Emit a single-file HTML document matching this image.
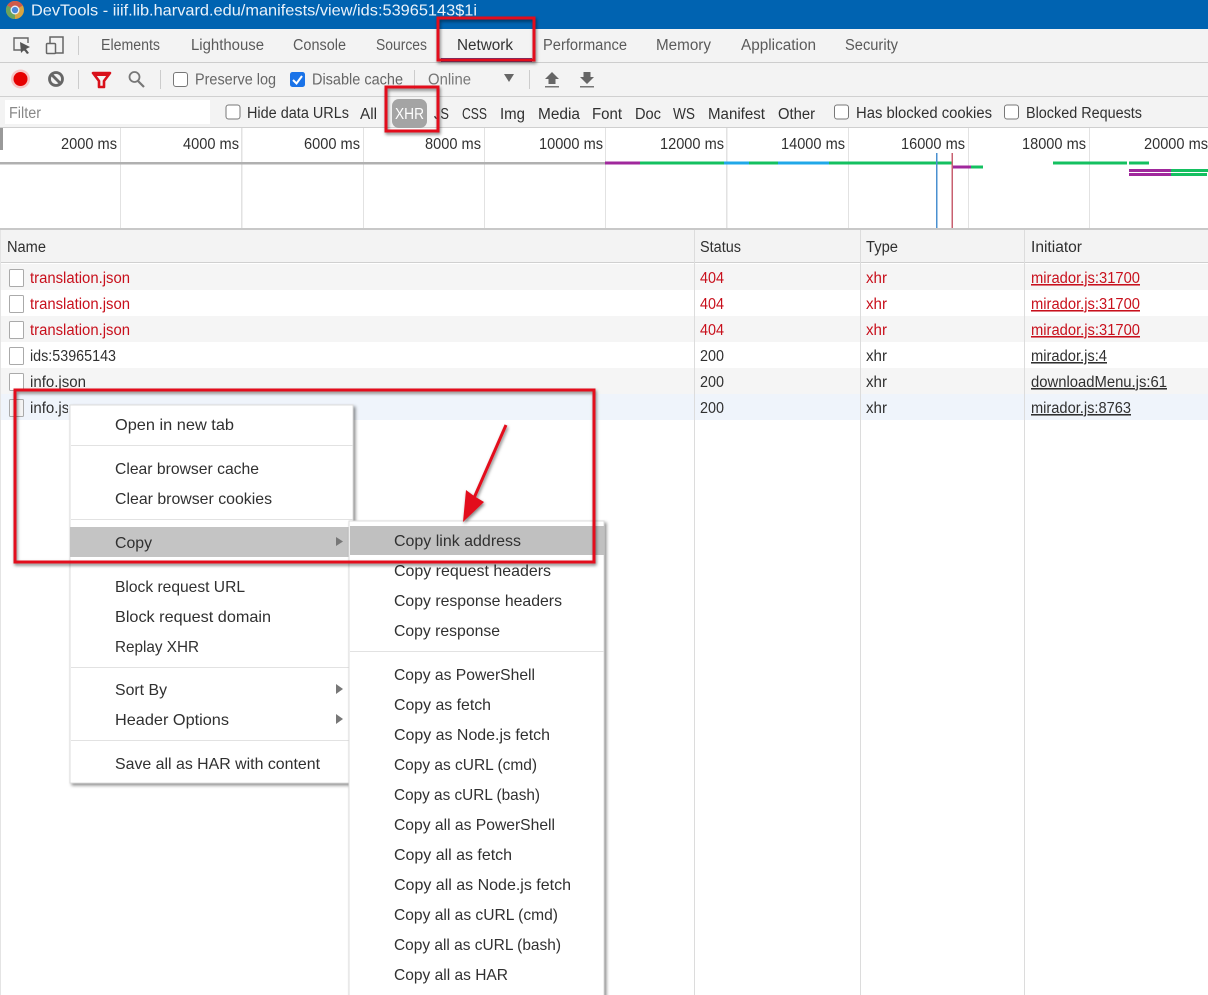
<!DOCTYPE html>
<html><head><meta charset="utf-8"><style>
html,body{margin:0;padding:0;background:#fff;width:1208px;height:995px;overflow:hidden}
svg{display:block}
text{font-family:"Liberation Sans",sans-serif;font-size:15.5px;fill:#444}
.d text{fill:#303030}
.t text{fill:#5a5a5a}
.r text{fill:#c8101c}
.m text{fill:#303030;font-size:16px}
</style></head><body>
<svg width="1208" height="995" viewBox="0 0 1208 995" xmlns="http://www.w3.org/2000/svg" lengthAdjust="spacingAndGlyphs">
<defs>
<filter id="ms" x="-10%" y="-10%" width="120%" height="120%"><feDropShadow dx="2" dy="2" stdDeviation="1.5" flood-color="#000" flood-opacity=".45"/></filter>
<filter id="rs" x="-10%" y="-10%" width="120%" height="120%"><feDropShadow dx="1" dy="2" stdDeviation="1.5" flood-color="#000" flood-opacity=".5"/></filter>
<clipPath id="c1"><rect x="0" y="395" width="68" height="25"/></clipPath>
</defs>
<rect width="1208" height="995" fill="#fff"/>
<!-- title -->
<rect width="1208" height="29" fill="#0063b1"/>
<circle cx="15" cy="10" r="9" fill="#d9a441"/><path d="M15 10L7.200 5.500A9 9 0 0 1 22.800 5.500Z" fill="#cf5a4a"/><path d="M15 10L15 19A9 9 0 0 1 7.200 5.500Z" fill="#6ba35c"/><circle cx="15" cy="10" r="3.800" fill="#4a86d8" stroke="#e8eef5" stroke-width="1.300"/>
<text x="31" y="15.500" textLength="446" lengthAdjust="spacingAndGlyphs" style="fill:#eaf2fa;font-size:16px">DevTools - iiif.lib.harvard.edu/manifests/view/ids:53965143$1i</text>
<!-- tabs -->
<rect y="29" width="1208" height="33" fill="#f3f3f3"/>
<rect y="62" width="1208" height="1" fill="#cdcdcd"/>
<path d="M25 50H14V38H28V43" fill="none" stroke="#666" stroke-width="1.400"/><path d="M20 42L30 47L26 49L29 53L27 54L24 50L21 53Z" fill="#555"/>
<rect x="46.500" y="43.500" width="9" height="10" rx="1" fill="none" stroke="#666" stroke-width="1.500"/><path d="M50 43V37H63V53H55" fill="none" stroke="#666" stroke-width="1.500"/>
<rect x="78" y="36" width="1" height="19" fill="#ccc"/>
<g class="t">
<text x="101" y="50" textLength="59" lengthAdjust="spacingAndGlyphs">Elements</text>
<text x="191" y="50" textLength="73" lengthAdjust="spacingAndGlyphs">Lighthouse</text>
<text x="293" y="50" textLength="53" lengthAdjust="spacingAndGlyphs">Console</text>
<text x="376" y="50" textLength="51" lengthAdjust="spacingAndGlyphs">Sources</text>
<text x="543" y="50" textLength="84" lengthAdjust="spacingAndGlyphs">Performance</text>
<text x="656" y="50" textLength="55" lengthAdjust="spacingAndGlyphs">Memory</text>
<text x="741" y="50" textLength="75" lengthAdjust="spacingAndGlyphs">Application</text>
<text x="845" y="50" textLength="53" lengthAdjust="spacingAndGlyphs">Security</text>
</g>
<text x="457" y="50" textLength="56" lengthAdjust="spacingAndGlyphs" style="fill:#333">Network</text>
<rect x="441" y="58" width="91" height="4" fill="#2a4a9a"/>
<!-- toolbar -->
<rect y="63" width="1208" height="33" fill="#f3f3f3"/>
<rect y="96" width="1208" height="1" fill="#d0d0d0"/>
<circle cx="20.500" cy="79" r="9.500" fill="#f6c4c4"/><circle cx="20.500" cy="79" r="7" fill="#e60000"/>
<circle cx="56" cy="79" r="6.500" fill="none" stroke="#666" stroke-width="2.800"/><path d="M51.500 74.500L60.500 83.500" stroke="#666" stroke-width="2.800"/>
<rect x="78" y="70" width="1" height="19" fill="#ccc"/>
<path d="M93 73H110L104 81V87H99V81Z" fill="none" stroke="#d9101a" stroke-width="2.600" stroke-linejoin="round"/><rect x="94" y="73" width="15" height="3" fill="#d9101a"/>
<circle cx="134.500" cy="77" r="5" fill="none" stroke="#777" stroke-width="1.800"/><path d="M138 81L144 87" stroke="#777" stroke-width="2.200"/>
<rect x="160" y="70" width="1" height="19" fill="#ccc"/>
<rect x="173.500" y="72.500" width="14" height="14" rx="2.500" fill="#fff" stroke="#777"/>
<text x="195" y="84.500" textLength="81" lengthAdjust="spacingAndGlyphs" style="fill:#666">Preserve log</text>
<rect x="290" y="72" width="15" height="15" rx="2.500" fill="#1a73e8"/><path d="M293 80L296.500 83.500L302 76" fill="none" stroke="#fff" stroke-width="2"/>
<text x="312" y="84.500" textLength="91" lengthAdjust="spacingAndGlyphs" style="fill:#666">Disable cache</text>
<rect x="414" y="70" width="1" height="19" fill="#ccc"/>
<text x="428" y="84.500" textLength="43" lengthAdjust="spacingAndGlyphs" style="fill:#777">Online</text>
<path d="M504 74H514L509 82Z" fill="#666"/>
<rect x="529" y="70" width="1" height="19" fill="#ccc"/>
<path d="M552 72L559 79H555.500V84H548.500V79H545Z" fill="#666"/><rect x="545" y="86" width="14" height="1.500" fill="#777"/>
<path d="M587 84L594 77H590.500V72H583.500V77H580Z" fill="#666"/><rect x="580" y="86" width="14" height="1.500" fill="#777"/>
<!-- filter row -->
<rect y="97" width="1208" height="30" fill="#f3f3f3"/>
<rect y="127" width="1208" height="1" fill="#cfcfcf"/>
<rect x="5" y="100" width="205" height="24" fill="#fff"/>
<text x="9" y="118" textLength="32" lengthAdjust="spacingAndGlyphs" style="fill:#888">Filter</text>
<rect x="226" y="105" width="14" height="14" rx="2.500" fill="#fff" stroke="#777"/>
<g class="d" >
<text x="247" y="118" textLength="102" lengthAdjust="spacingAndGlyphs">Hide data URLs</text>
<text x="360" y="119" textLength="17" lengthAdjust="spacingAndGlyphs">All</text>
<text x="434" y="119" textLength="15" lengthAdjust="spacingAndGlyphs">JS</text>
<text x="462" y="119" textLength="25" lengthAdjust="spacingAndGlyphs">CSS</text>
<text x="500" y="119" textLength="25" lengthAdjust="spacingAndGlyphs">Img</text>
<text x="538" y="119" textLength="42" lengthAdjust="spacingAndGlyphs">Media</text>
<text x="592" y="119" textLength="30" lengthAdjust="spacingAndGlyphs">Font</text>
<text x="635" y="119" textLength="26" lengthAdjust="spacingAndGlyphs">Doc</text>
<text x="673" y="119" textLength="22" lengthAdjust="spacingAndGlyphs">WS</text>
<text x="708" y="119" textLength="57" lengthAdjust="spacingAndGlyphs">Manifest</text>
<text x="778" y="119" textLength="37" lengthAdjust="spacingAndGlyphs">Other</text>
<text x="856" y="118" textLength="136" lengthAdjust="spacingAndGlyphs">Has blocked cookies</text>
<text x="1026" y="118" textLength="116" lengthAdjust="spacingAndGlyphs">Blocked Requests</text>
</g>
<rect x="392" y="99" width="35" height="29" rx="7" fill="#a4a4a4"/>
<text x="395" y="119" textLength="29" lengthAdjust="spacingAndGlyphs" style="fill:#fff">XHR</text>
<rect x="834.500" y="105" width="14" height="14" rx="2.500" fill="#fff" stroke="#777"/>
<rect x="1004.500" y="105" width="14" height="14" rx="2.500" fill="#fff" stroke="#777"/>
<!-- timeline -->
<rect y="128" width="1208" height="100" fill="#fff"/>
<rect x="0" y="128" width="3" height="22" fill="#999"/>
<g fill="#e2e2e2">
<rect x="120" y="128" width="1" height="100"/><rect x="241" y="128" width="1.500" height="100"/><rect x="363" y="128" width="1" height="100"/><rect x="484" y="128" width="1" height="100"/><rect x="605" y="128" width="1" height="100"/><rect x="726" y="128" width="1.500" height="100"/><rect x="848" y="128" width="1" height="100"/><rect x="968" y="128" width="1" height="100"/><rect x="1089" y="128" width="1" height="100"/>
</g>
<g class="d">
<text x="61" y="149" textLength="56" lengthAdjust="spacingAndGlyphs">2000 ms</text>
<text x="183" y="149" textLength="56" lengthAdjust="spacingAndGlyphs">4000 ms</text>
<text x="304" y="149" textLength="56" lengthAdjust="spacingAndGlyphs">6000 ms</text>
<text x="425" y="149" textLength="56" lengthAdjust="spacingAndGlyphs">8000 ms</text>
<text x="539" y="149" textLength="64" lengthAdjust="spacingAndGlyphs">10000 ms</text>
<text x="660" y="149" textLength="64" lengthAdjust="spacingAndGlyphs">12000 ms</text>
<text x="781" y="149" textLength="64" lengthAdjust="spacingAndGlyphs">14000 ms</text>
<text x="901" y="149" textLength="64" lengthAdjust="spacingAndGlyphs">16000 ms</text>
<text x="1022" y="149" textLength="64" lengthAdjust="spacingAndGlyphs">18000 ms</text>
<text x="1144" y="149" textLength="64" lengthAdjust="spacingAndGlyphs">20000 ms</text>
</g>
<rect x="0" y="162" width="605" height="2.500" fill="#b0b0b0"/>
<rect x="605" y="161.500" width="35" height="3" fill="#a0289c"/>
<rect x="640" y="161.500" width="312" height="3" fill="#14c060"/>
<rect x="724" y="161.500" width="25" height="3" fill="#20a8e8"/>
<rect x="778" y="161.500" width="51" height="3" fill="#20a8e8"/>
<rect x="952" y="165.500" width="19" height="3" fill="#a0289c"/>
<rect x="971" y="165.500" width="12" height="3" fill="#14c060"/>
<rect x="1053" y="161.500" width="74" height="3" fill="#14c060"/>
<rect x="1129" y="161.500" width="20" height="3" fill="#14c060"/>
<rect x="1129" y="169" width="42" height="3" fill="#a0289c"/>
<rect x="1171" y="169" width="37" height="3" fill="#14c060"/>
<rect x="1129" y="173" width="42" height="3" fill="#a0289c"/>
<rect x="1171" y="173" width="36" height="3" fill="#14c060"/>
<rect x="936" y="153" width="1.500" height="75" fill="#4a90d0"/>
<rect x="951.500" y="153" width="1.500" height="75" fill="#c86070"/>
<rect y="228" width="1208" height="2" fill="#c8c8c8"/>
<!-- header -->
<rect y="230" width="1208" height="33" fill="#f3f3f3"/>
<rect y="262" width="1208" height="1" fill="#d0d0d0"/>
<rect y="264" width="1208" height="26" fill="#f5f5f5"/>
<rect y="316" width="1208" height="26" fill="#f5f5f5"/>
<rect y="368" width="1208" height="26" fill="#f5f5f5"/>
<rect y="394" width="1208" height="26" fill="#eff4fb"/>
<rect x="0" y="230" width="1" height="765" fill="#e4e4e4"/>
<g fill="#dcdcdc"><rect x="694" y="230" width="1" height="765"/><rect x="860" y="230" width="1" height="765"/><rect x="1024" y="230" width="1" height="765"/></g>
<g class="d">
<text x="7" y="252" textLength="39" lengthAdjust="spacingAndGlyphs">Name</text>
<text x="700" y="252" textLength="41" lengthAdjust="spacingAndGlyphs">Status</text>
<text x="866" y="252" textLength="32" lengthAdjust="spacingAndGlyphs">Type</text>
<text x="1031" y="252" textLength="51" lengthAdjust="spacingAndGlyphs">Initiator</text>
</g>
<g fill="#fff" stroke="#aaa"><rect x="9.500" y="269.500" width="14" height="17" rx="1"/><rect x="9.500" y="295.500" width="14" height="17" rx="1"/><rect x="9.500" y="321.500" width="14" height="17" rx="1"/><rect x="9.500" y="347.500" width="14" height="17" rx="1"/><rect x="9.500" y="373.500" width="14" height="17" rx="1"/><rect x="9.500" y="399.500" width="14" height="17" rx="1" fill="#f4f4f4"/></g>
<g class="r">
<text x="30" y="283" textLength="100" lengthAdjust="spacingAndGlyphs">translation.json</text>
<text x="30" y="309" textLength="100" lengthAdjust="spacingAndGlyphs">translation.json</text>
<text x="30" y="335" textLength="100" lengthAdjust="spacingAndGlyphs">translation.json</text>
<text x="700" y="283" textLength="24" lengthAdjust="spacingAndGlyphs">404</text>
<text x="700" y="309" textLength="24" lengthAdjust="spacingAndGlyphs">404</text>
<text x="700" y="335" textLength="24" lengthAdjust="spacingAndGlyphs">404</text>
<text x="866" y="283" textLength="21" lengthAdjust="spacingAndGlyphs">xhr</text>
<text x="866" y="309" textLength="21" lengthAdjust="spacingAndGlyphs">xhr</text>
<text x="866" y="335" textLength="21" lengthAdjust="spacingAndGlyphs">xhr</text>
<text x="1031" y="283" textLength="109" lengthAdjust="spacingAndGlyphs" text-decoration="underline">mirador.js:31700</text>
<text x="1031" y="309" textLength="109" lengthAdjust="spacingAndGlyphs" text-decoration="underline">mirador.js:31700</text>
<text x="1031" y="335" textLength="109" lengthAdjust="spacingAndGlyphs" text-decoration="underline">mirador.js:31700</text>
</g>
<g class="d">
<text x="30" y="361" textLength="86" lengthAdjust="spacingAndGlyphs">ids:53965143</text>
<text x="30" y="387" textLength="56" lengthAdjust="spacingAndGlyphs">info.json</text>
<g clip-path="url(#c1)"><text x="30" y="413" textLength="56" lengthAdjust="spacingAndGlyphs">info.json</text></g>
<text x="700" y="361" textLength="24" lengthAdjust="spacingAndGlyphs">200</text>
<text x="700" y="387" textLength="24" lengthAdjust="spacingAndGlyphs">200</text>
<text x="700" y="413" textLength="24" lengthAdjust="spacingAndGlyphs">200</text>
<text x="866" y="361" textLength="21" lengthAdjust="spacingAndGlyphs">xhr</text>
<text x="866" y="387" textLength="21" lengthAdjust="spacingAndGlyphs">xhr</text>
<text x="866" y="413" textLength="21" lengthAdjust="spacingAndGlyphs">xhr</text>
<text x="1031" y="361" textLength="76" lengthAdjust="spacingAndGlyphs" text-decoration="underline">mirador.js:4</text>
<text x="1031" y="387" textLength="136" lengthAdjust="spacingAndGlyphs" text-decoration="underline">downloadMenu.js:61</text>
<text x="1031" y="413" textLength="100" lengthAdjust="spacingAndGlyphs" text-decoration="underline">mirador.js:8763</text>
</g>
<!-- main menu -->
<rect x="70" y="405" width="283" height="378" fill="#fff" stroke="#dcdcdc" stroke-width="1" filter="url(#ms)"/>
<g fill="#e2e2e2"><rect x="71" y="445" width="282" height="1"/><rect x="71" y="519" width="282" height="1"/><rect x="71" y="667" width="282" height="1"/><rect x="71" y="740" width="282" height="1"/></g>
<rect x="70" y="527" width="279" height="30" fill="#c4c4c4"/>
<g class="m">
<text x="115" y="430" textLength="119" lengthAdjust="spacingAndGlyphs">Open in new tab</text>
<text x="115" y="474" textLength="144" lengthAdjust="spacingAndGlyphs">Clear browser cache</text>
<text x="115" y="504" textLength="157" lengthAdjust="spacingAndGlyphs">Clear browser cookies</text>
<text x="115" y="548" textLength="37" lengthAdjust="spacingAndGlyphs">Copy</text>
<text x="115" y="592" textLength="130" lengthAdjust="spacingAndGlyphs">Block request URL</text>
<text x="115" y="622" textLength="156" lengthAdjust="spacingAndGlyphs">Block request domain</text>
<text x="115" y="652" textLength="84" lengthAdjust="spacingAndGlyphs">Replay XHR</text>
<text x="115" y="695" textLength="52" lengthAdjust="spacingAndGlyphs">Sort By</text>
<text x="115" y="725" textLength="114" lengthAdjust="spacingAndGlyphs">Header Options</text>
<text x="115" y="769" textLength="205" lengthAdjust="spacingAndGlyphs">Save all as HAR with content</text>
</g>
<g fill="#777"><path d="M336 537L343 541.500L336 546Z"/><path d="M336 684L343 689L336 694Z"/><path d="M336 714L343 719L336 724Z"/></g>
<!-- submenu -->
<rect x="349" y="521" width="255" height="480" fill="#fff" stroke="#dcdcdc" stroke-width="1" filter="url(#ms)"/>
<rect x="350" y="526" width="254" height="29" fill="#c0c0c0"/>
<rect x="350" y="651" width="254" height="1" fill="#e2e2e2"/>
<g class="m">
<text x="394" y="546" textLength="127" lengthAdjust="spacingAndGlyphs">Copy link address</text>
<text x="394" y="576" textLength="157" lengthAdjust="spacingAndGlyphs">Copy request headers</text>
<text x="394" y="606" textLength="168" lengthAdjust="spacingAndGlyphs">Copy response headers</text>
<text x="394" y="636" textLength="106" lengthAdjust="spacingAndGlyphs">Copy response</text>
<text x="394" y="680" textLength="141" lengthAdjust="spacingAndGlyphs">Copy as PowerShell</text>
<text x="394" y="710" textLength="97" lengthAdjust="spacingAndGlyphs">Copy as fetch</text>
<text x="394" y="740" textLength="156" lengthAdjust="spacingAndGlyphs">Copy as Node.js fetch</text>
<text x="394" y="770" textLength="143" lengthAdjust="spacingAndGlyphs">Copy as cURL (cmd)</text>
<text x="394" y="800" textLength="146" lengthAdjust="spacingAndGlyphs">Copy as cURL (bash)</text>
<text x="394" y="830" textLength="161" lengthAdjust="spacingAndGlyphs">Copy all as PowerShell</text>
<text x="394" y="860" textLength="118" lengthAdjust="spacingAndGlyphs">Copy all as fetch</text>
<text x="394" y="890" textLength="177" lengthAdjust="spacingAndGlyphs">Copy all as Node.js fetch</text>
<text x="394" y="920" textLength="164" lengthAdjust="spacingAndGlyphs">Copy all as cURL (cmd)</text>
<text x="394" y="950" textLength="167" lengthAdjust="spacingAndGlyphs">Copy all as cURL (bash)</text>
<text x="394" y="980" textLength="114" lengthAdjust="spacingAndGlyphs">Copy all as HAR</text>
</g>
<!-- red annotations -->
<g fill="none" stroke="#e3101c" stroke-width="3" filter="url(#rs)">
<rect x="438" y="18" width="96" height="42"/>
<rect x="386" y="87" width="52" height="44"/>
<rect x="15" y="390" width="579" height="172"/>
</g>
<g filter="url(#rs)"><path d="M506 425L474 498" stroke="#e3101c" stroke-width="3" fill="none"/><path d="M463 522L466 490L474 496L484 502Z" fill="#e3101c"/></g>
</svg>
</body></html>
